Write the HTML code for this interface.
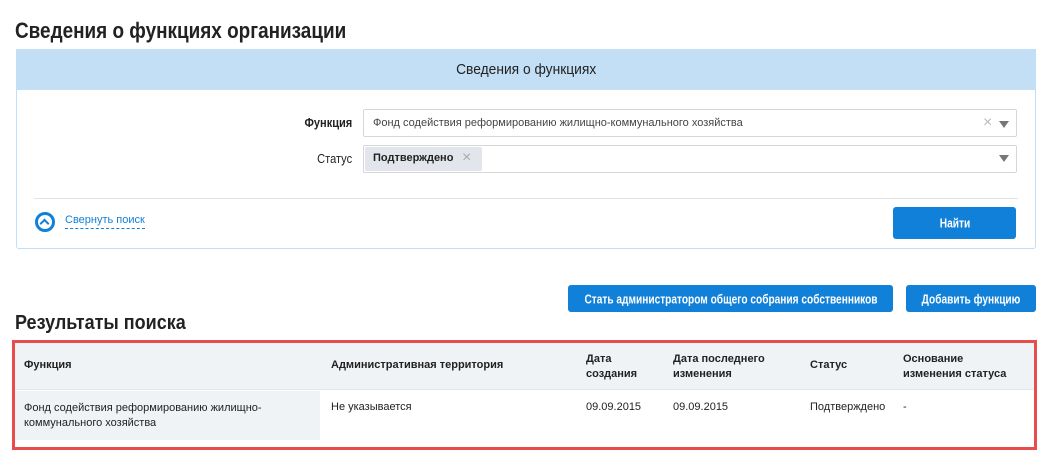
<!DOCTYPE html>
<html><head><meta charset="utf-8"><style>
*{box-sizing:border-box;margin:0;padding:0}
body{width:1056px;height:460px;background:#fff;font-family:"Liberation Sans",sans-serif;color:#222;position:relative;overflow:hidden}
.a{position:absolute}
.s{font-size:11px}
.n{display:inline-block;transform:scaleX(0.86);transform-origin:left center;white-space:nowrap}
.btn{position:absolute;background:#1180d9;color:#fff;border-radius:3px;font-size:13px;font-weight:bold;white-space:nowrap;overflow:hidden}
.btn span{position:absolute;left:50%;top:50%;transform:translate(-50%,-50%) scaleX(0.78)}
</style></head><body>
<div class="a" style="left:15px;top:18px;font-size:22px;font-weight:bold"><span class="n" style="transform:scaleX(0.86)">Сведения о функциях организации</span></div>
<div class="a" style="left:16px;top:49px;width:1020px;height:200px;border:1px solid #c2dff5;border-radius:3px"></div>
<div class="a" style="left:16px;top:49px;width:1020px;height:41px;background:#c2dff5;text-align:center;line-height:41px;font-size:15px"><span style="display:inline-block;transform:scaleX(0.92)">Сведения о функциях</span></div>
<div class="a" style="left:292px;top:115px;width:60px;text-align:right;font-size:13px;font-weight:bold"><span style="display:inline-block;transform:scaleX(0.85);transform-origin:right center">Функция</span></div>
<div class="a" style="left:292px;top:151px;width:60px;text-align:right;font-size:13px"><span style="display:inline-block;transform:scaleX(0.85);transform-origin:right center">Статус</span></div>
<div class="a" style="left:363px;top:109px;width:654px;height:28px;border:1px solid #d6d6d6;border-radius:2px"></div>
<div class="a s" style="left:373px;top:117px;color:#444">Фонд содействия реформированию жилищно-коммунального хозяйства</div>
<div class="a" style="left:983px;top:116px;color:#bbb;font-size:16px;line-height:14px">×</div>
<div class="a" style="left:999px;top:121px;border-left:5px solid transparent;border-right:5px solid transparent;border-top:7px solid #777"></div>
<div class="a" style="left:363px;top:145px;width:654px;height:28px;border:1px solid #d6d6d6;border-radius:2px"></div>
<div class="a" style="left:365px;top:147px;width:117px;height:24px;background:#e2e6ec;border-radius:2px"></div>
<div class="a s" style="left:373px;top:152px;font-weight:bold">Подтверждено</div>
<div class="a" style="left:462px;top:149px;color:#aaa;font-size:16px">×</div>
<div class="a" style="left:999px;top:155px;border-left:5px solid transparent;border-right:5px solid transparent;border-top:7px solid #777"></div>
<div class="a" style="left:34px;top:198px;width:984px;height:1px;background:#e2e2e2"></div>
<div class="a" style="left:35px;top:212px;width:20px;height:20px;border:3px solid #1180d9;border-radius:50%"></div>
<div class="a" style="left:41px;top:220px;width:7px;height:7px;border-left:2.5px solid #1180d9;border-top:2.5px solid #1180d9;transform:rotate(45deg)"></div>
<div class="a s" style="left:65px;top:214px;color:#1180d9;border-bottom:1px dashed #1180d9;padding-bottom:2px">Свернуть поиск</div>
<div class="btn" style="left:893px;top:207px;width:123px;height:32px"><span>Найти</span></div>
<div class="btn" style="left:568px;top:285px;width:325px;height:27px"><span>Стать администратором общего собрания собственников</span></div>
<div class="btn" style="left:906px;top:285px;width:130px;height:27px"><span>Добавить функцию</span></div>
<div class="a" style="left:15px;top:312px;font-size:20px;font-weight:bold"><span class="n" style="transform:scaleX(0.9)">Результаты поиска</span></div>
<div class="a" style="left:12px;top:340px;width:1025px;height:110px;border:3px solid #e84c4c"></div>
<div class="a" style="left:15px;top:343px;width:1019px;height:47px;background:#f0f3f6;border-bottom:1px solid #e2e6ea"></div>
<div class="a" style="left:15px;top:391px;width:305px;height:49px;background:#f0f3f6"></div>
<div class="a s" style="left:24px;top:359px;font-weight:bold">Функция</div>
<div class="a s" style="left:331px;top:359px;font-weight:bold">Административная территория</div>
<div class="a s" style="left:586px;top:352px;font-weight:bold;line-height:15px">Дата<br>создания</div>
<div class="a s" style="left:673px;top:352px;font-weight:bold;line-height:15px">Дата последнего<br>изменения</div>
<div class="a s" style="left:810px;top:359px;font-weight:bold">Статус</div>
<div class="a s" style="left:903px;top:352px;font-weight:bold;line-height:15px">Основание<br>изменения статуса</div>
<div class="a s" style="left:24px;top:401px;line-height:15px">Фонд содействия реформированию жилищно-<br>коммунального хозяйства</div>
<div class="a s" style="left:331px;top:401px">Не указывается</div>
<div class="a s" style="left:586px;top:401px">09.09.2015</div>
<div class="a s" style="left:673px;top:401px">09.09.2015</div>
<div class="a s" style="left:810px;top:401px">Подтверждено</div>
<div class="a s" style="left:903px;top:401px">-</div>
</body></html>
